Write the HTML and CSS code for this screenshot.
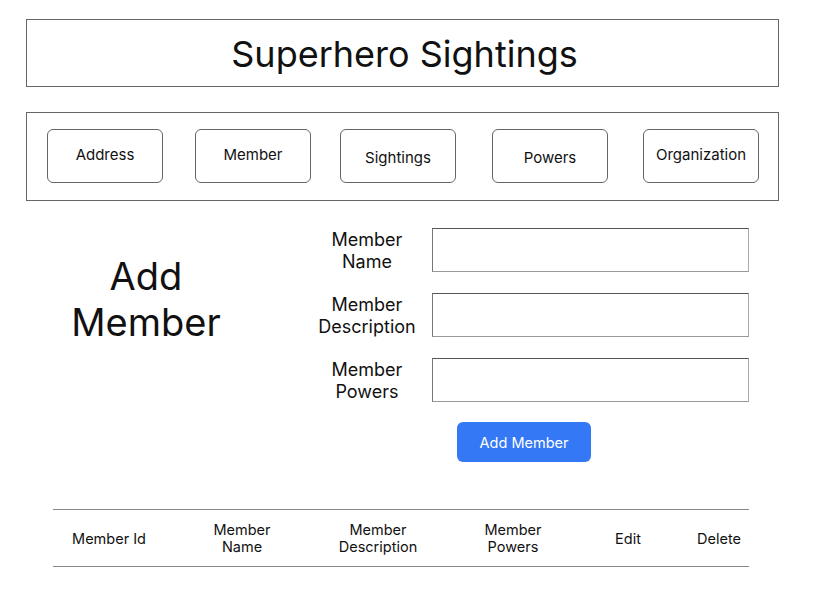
FILE: index.html
```html
<!DOCTYPE html>
<html>
<head>
<meta charset="utf-8">
<link rel="stylesheet" href="styles.css">
</head>
<body>
<div class="page">
  <header class="title-box"><h1>Superhero Sightings</h1></header>
  <nav class="nav-box">
    <a class="nav-btn">Address</a>
    <a class="nav-btn nav-2">Member</a>
    <a class="nav-btn nav-3 nav-low">Sightings</a>
    <a class="nav-btn nav-4 nav-low">Powers</a>
    <a class="nav-btn nav-5">Organization</a>
  </nav>
  <section class="main">
    <h2 class="heading">Add<br>Member</h2>
    <form class="form">
      <label class="label">Member<br>Name</label>
      <div class="input"></div>
      <label class="label">Member<br>Description</label>
      <div class="input"></div>
      <label class="label">Member<br>Powers</label>
      <div class="input"></div>
      <div class="btn-cell"><button type="button" class="add-btn">Add Member</button></div>
    </form>
  </section>
  <div class="table">
    <div class="th">Member Id</div>
    <div class="th">Member<br>Name</div>
    <div class="th">Member<br>Description</div>
    <div class="th">Member<br>Powers</div>
    <div class="th">Edit</div>
    <div class="th th-last">Delete</div>
  </div>
</div>
</body>
</html>
```
FILE: styles.css
```css
* { box-sizing: border-box; }
html, body { margin: 0; padding: 0; background: #fff; }
body {
  font-family: Inter, "Noto Sans", "Liberation Sans", sans-serif;
  color: #111;
}
.page {
  width: 825px;
  height: 611px;
  padding: 19px 0 0 26px;
}
.title-box {
  width: 753px;
  height: 68px;
  border: 1px solid #666;
  display: flex;
  align-items: center;
  justify-content: center;
}
.title-box h1 {
  margin: 0;
  font-size: 36px;
  font-weight: 400;
  line-height: 1;
  padding: 2px 0 0 4px;
}
.nav-box {
  margin-top: 25px;
  width: 753px;
  height: 89px;
  border: 1px solid #666;
  padding: 16px 19px 0 20px;
  display: flex;
  align-items: flex-start;
}
.nav-btn {
  width: 116px;
  height: 54px;
  border: 1px solid #666;
  border-radius: 6px;
  display: flex;
  align-items: center;
  justify-content: center;
  font-size: 15px;
  padding-bottom: 3px;
}
.nav-2 { margin-left: 32px; }
.nav-3 { margin-left: 29px; }
.nav-4 { margin-left: 36px; }
.nav-5 { margin-left: 35px; }
.nav-low { padding-bottom: 0; padding-top: 2px; }
.main {
  margin-top: 27px;
  display: flex;
  align-items: flex-start;
}
.heading {
  width: 240px;
  margin: 25px 0 0 0;
  text-align: center;
  font-size: 38px;
  font-weight: 400;
  line-height: 46px;
}
.form {
  margin-left: 41px;
  display: grid;
  grid-template-columns: 120px 317px;
  column-gap: 5px;
  row-gap: 21px;
}
.label {
  height: 44px;
  display: flex;
  align-items: center;
  justify-content: center;
  text-align: center;
  font-size: 18px;
  line-height: 22px;
  padding-top: 1px;
}
.input {
  height: 44px;
  border: 1px solid #777;
  border-top-color: #555;
  border-right-color: #aaa;
  border-bottom-color: #999;
}
.btn-cell {
  grid-column: 2;
  margin-top: -1px;
}
.add-btn {
  margin-left: 25px;
  width: 134px;
  height: 40px;
  border: none;
  border-radius: 6px;
  background: #3478f6;
  color: #fff;
  font-family: inherit;
  font-size: 14.5px;
}
.table {
  margin: 47px 0 0 27px;
  width: 696px;
  height: 58px;
  border-top: 1px solid #888;
  border-bottom: 1px solid #888;
  display: grid;
  grid-template-columns: 112px 154px 118px 152px 78px 82px;
  align-items: center;
}
.th {
  text-align: center;
  font-size: 14.5px;
  line-height: 17px;
}
.th-last { text-align: right; padding-right: 8px; }
```
